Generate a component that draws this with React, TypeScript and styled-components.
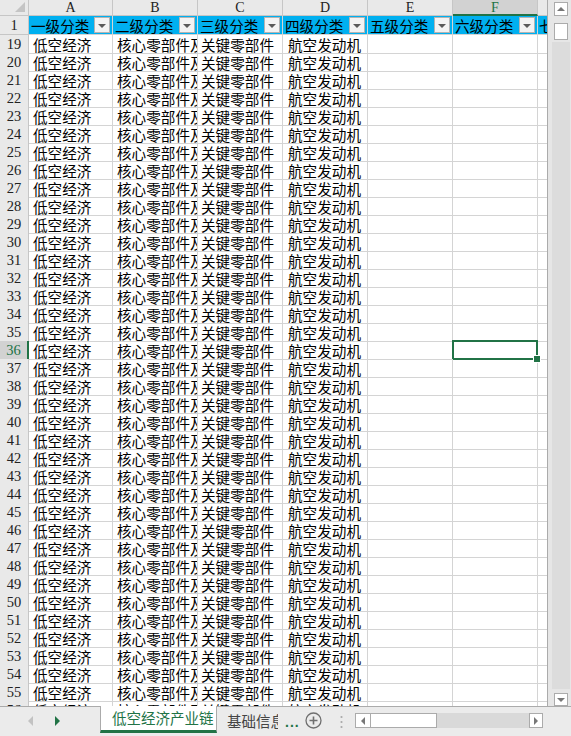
import React from "react";
import styled, { createGlobalStyle, css } from "styled-components";

const Global = createGlobalStyle`
  html, body { margin: 0; padding: 0; overflow: hidden; background: #fff; }
  * { box-sizing: border-box; }
`;

const GREEN = "#217346";
const BLUE = "#00b0f0";
const GRID = "#d4d4d4";
const HEAD_BG = "#e9e9e9";
const HEAD_LINE = "#c6c6c6";

const COLS = "29px 84px 85px 85px 85px 85px 85px 85px";

const Shell = styled.div`
  width: 571px;
  height: 736px;
  display: flex;
  flex-direction: column;
  overflow: hidden;
  font-family: "Noto Sans CJK SC", sans-serif;
`;

const Main = styled.div`
  height: 707px;
  display: flex;
  flex-direction: row;
  border-bottom: 1px solid #ababab;
`;

const Sheet = styled.div`
  width: 548px;
  flex: none;
  display: flex;
  flex-direction: column;
  overflow: hidden;
  border-right: 1px solid #ababab;
`;

const Row = styled.div<{ $h: number }>`
  display: grid;
  grid-template-columns: ${COLS};
  width: 623px;
  height: ${(p) => p.$h}px;
  flex: none;
`;

const Corner = styled.div`
  background: ${HEAD_BG};
  border-right: 1px solid ${HEAD_LINE};
  border-bottom: 1px solid ${HEAD_LINE};
  display: flex;
  align-items: flex-end;
  justify-content: flex-end;
  padding: 0 3px 3px 0;
`;

const CornerTri = styled.div`
  width: 0;
  height: 0;
  border-left: 10px solid transparent;
  border-bottom: 10px solid #c4c4c4;
`;

const ColHead = styled.div<{ $active?: boolean }>`
  background: ${(p) => (p.$active ? "#d2d2d2" : HEAD_BG)};
  border-right: 1px solid ${HEAD_LINE};
  border-bottom: ${(p) => (p.$active ? `2px solid ${GREEN}` : `1px solid ${HEAD_LINE}`)};
  color: ${(p) => (p.$active ? GREEN : "#222")};
  font-family: "Liberation Serif", serif;
  font-size: 14px;
  line-height: 15px;
  text-align: center;
  overflow: hidden;
`;

const RowHead = styled.div<{ $active?: boolean }>`
  background: ${(p) => (p.$active ? "#d2d2d2" : HEAD_BG)};
  border-right: ${(p) => (p.$active ? `2px solid ${GREEN}` : `1px solid ${HEAD_LINE}`)};
  border-bottom: 1px solid ${HEAD_LINE};
  color: ${(p) => (p.$active ? GREEN : "#222")};
  font-family: "Liberation Serif", serif;
  font-size: 14.5px;
  display: flex;
  align-items: center;
  justify-content: center;
  padding-top: 1px;
`;

const Cell = styled.div<{ $head?: boolean; $selected?: boolean; $pad?: number }>`
  position: relative;
  border-right: 1px solid ${GRID};
  border-bottom: 1px solid ${GRID};
  font-size: 14.6px;
  color: #000;
  white-space: nowrap;
  overflow: hidden;
  display: flex;
  align-items: center;
  padding-left: ${(p) => p.$pad ?? 4}px;
  ${(p) =>
    p.$head &&
    css`
      background: ${BLUE};
      justify-content: space-between;
    `}
  ${(p) =>
    p.$selected &&
    css`
      overflow: visible;
      &::after {
        content: "";
        position: absolute;
        left: -1px;
        top: -1px;
        right: -1px;
        bottom: -1px;
        border: 2px solid ${GREEN};
      }
      &::before {
        content: "";
        position: absolute;
        right: -4px;
        bottom: -4px;
        width: 6px;
        height: 6px;
        background: ${GREEN};
        border: 1px solid #fff;
        z-index: 2;
      }
    `}
`;

const HeadText = styled.span`
  overflow: hidden;
  white-space: nowrap;
`;

const FilterBtn = styled.div`
  flex: none;
  width: 16px;
  height: 16px;
  margin-right: 2px;
  background: #f3f3f3;
  border: 1px solid #b4b4b4;
  display: flex;
  align-items: center;
  justify-content: center;
`;

const FilterTri = styled.div`
  width: 0;
  height: 0;
  border-left: 4px solid transparent;
  border-right: 4px solid transparent;
  border-top: 4px solid #5a5a5a;
  margin-top: 1px;
`;

const VScroll = styled.div`
  width: 23px;
  background: #e6e6e6;
  display: flex;
  flex-direction: column;
  align-items: center;
  padding: 2px 0 0 2px;
`;

const ScrollBtn = styled.div<{ $w: number; $h: number }>`
  width: ${(p) => p.$w}px;
  height: ${(p) => p.$h}px;
  flex: none;
  background: #fff;
  border: 1px solid #ababab;
  display: flex;
  align-items: center;
  justify-content: center;
`;

const VThumb = styled.div`
  width: 14px;
  height: 17px;
  flex: none;
  margin-top: 7px;
  background: #fff;
  border: 1px solid #ababab;
`;

const VTrack = styled.div`
  flex: 1;
  width: 18px;
  background: #dcdcdc;
  margin: 2px 0 4px;
`;

const Arrow = styled.div<{ $dir: "up" | "down" | "left" | "right"; $c?: string; $s?: number }>`
  width: 0;
  height: 0;
  ${(p) => {
    const s = p.$s ?? 4;
    const c = p.$c ?? "#777";
    switch (p.$dir) {
      case "up":
        return css`border-left: ${s}px solid transparent; border-right: ${s}px solid transparent; border-bottom: ${s}px solid ${c};`;
      case "down":
        return css`border-left: ${s}px solid transparent; border-right: ${s}px solid transparent; border-top: ${s}px solid ${c};`;
      case "left":
        return css`border-top: ${s}px solid transparent; border-bottom: ${s}px solid transparent; border-right: ${s}px solid ${c};`;
      default:
        return css`border-top: ${s}px solid transparent; border-bottom: ${s}px solid transparent; border-left: ${s}px solid ${c};`;
    }
  }}
`;

const TabBar = styled.div`
  flex: 1;
  display: flex;
  flex-direction: row;
  align-items: stretch;
  background: #ebebeb;
`;

const Nav = styled.div`
  width: 100px;
  flex: none;
  display: flex;
  align-items: center;
  gap: 22px;
  padding-left: 28px;
  padding-bottom: 2px;
`;

const Tab = styled.div<{ $active?: boolean; $w: number; $pad?: number }>`
  width: ${(p) => p.$w}px;
  flex: none;
  overflow: hidden;
  white-space: nowrap;
  font-size: 14.5px;
  display: flex;
  align-items: center;
  padding-left: ${(p) => p.$pad ?? 11}px;
  padding-bottom: 2px;
  color: ${(p) => (p.$active ? GREEN : "#444")};
  ${(p) =>
    p.$active &&
    css`
      background: #fff;
      border-left: 1px solid #ababab;
      border-right: 1px solid #ababab;
      border-bottom: 3px solid ${GREEN};
      margin-top: -1px;
      margin-bottom: 3px;
    `}
`;

const More = styled.div`
  flex: none;
  color: ${GREEN};
  font-size: 14px;
  font-weight: bold;
  font-family: "Liberation Sans", sans-serif;
  display: flex;
  align-items: center;
  width: 25px;
  padding-left: 7px;
  letter-spacing: 1px;
`;

const AddBtn = styled.div`
  flex: none;
  display: flex;
  align-items: center;
  width: 32px;
  padding: 0 0 2px 2px;
`;

const Dots = styled.div`
  flex: none;
  display: flex;
  align-items: center;
  width: 20px;
  padding-left: 5px;
`;

const HScroll = styled.div`
  width: 188px;
  flex: none;
  display: flex;
  align-items: center;
  padding-bottom: 2px;
`;

const HThumb = styled.div`
  width: 66px;
  height: 15px;
  background: #fff;
  border: 1px solid #ababab;
  border-left: none;
`;

const HTrack = styled.div`
  width: 92px;
  height: 15px;
  background: #d9d9d9;
`;

const data = Array.from({ length: 38 }, (_, i) => 19 + i);
const heads = ["一级分类", "二级分类", "三级分类", "四级分类", "五级分类", "六级分类"];
const letters = ["A", "B", "C", "D", "E", "F", "G"];

export default function App() {
  return (
    <>
      <Global />
      <Shell>
        <Main>
          <Sheet>
            <Row $h={16}>
              <Corner>
                <CornerTri />
              </Corner>
              {letters.map((l) => (
                <ColHead key={l} $active={l === "F"}>
                  {l}
                </ColHead>
              ))}
            </Row>
            <Row $h={19}>
              <RowHead>1</RowHead>
              {heads.map((h) => (
                <Cell key={h} $head $pad={2}>
                  <HeadText>{h}</HeadText>
                  <FilterBtn>
                    <FilterTri />
                  </FilterBtn>
                </Cell>
              ))}
              <Cell $head $pad={1}>
                <HeadText>七级分类</HeadText>
                <FilterBtn>
                  <FilterTri />
                </FilterBtn>
              </Cell>
            </Row>
            {data.map((n) => (
              <Row $h={18} key={n}>
                <RowHead $active={n === 36}>{n}</RowHead>
                <Cell>低空经济</Cell>
                <Cell>核心零部件及材料</Cell>
                <Cell $pad={3}>关键零部件</Cell>
                <Cell $pad={5}>航空发动机</Cell>
                <Cell />
                <Cell $selected={n === 36} />
                <Cell />
              </Row>
            ))}
          </Sheet>
          <VScroll>
            <ScrollBtn $w={14} $h={14}>
              <Arrow $dir="up" $s={4} />
            </ScrollBtn>
            <VThumb />
            <VTrack />
            <ScrollBtn $w={14} $h={13}>
              <Arrow $dir="down" $s={4} />
            </ScrollBtn>
          </VScroll>
        </Main>
        <TabBar>
          <Nav>
            <Arrow $dir="left" $c="#c2c2c2" $s={5} />
            <Arrow $dir="right" $c={GREEN} $s={5} />
          </Nav>
          <Tab $active $w={117}>
            低空经济产业链
          </Tab>
          <Tab $w={61} $pad={10}>
            基础信息
          </Tab>
          <More>...</More>
          <AddBtn>
            <svg width="17" height="17" viewBox="0 0 17 17">
              <circle cx="8.5" cy="8.5" r="7.5" fill="none" stroke="#6f6f6f" strokeWidth="1.3" />
              <path d="M8.5 4.5v8M4.5 8.5h8" stroke="#6f6f6f" strokeWidth="1.6" />
            </svg>
          </AddBtn>
          <Dots>
            <svg width="3" height="14" viewBox="0 0 3 14">
              <circle cx="1.5" cy="2" r="1.1" fill="#a8a8a8" />
              <circle cx="1.5" cy="7" r="1.1" fill="#a8a8a8" />
              <circle cx="1.5" cy="12" r="1.1" fill="#a8a8a8" />
            </svg>
          </Dots>
          <HScroll>
            <ScrollBtn $w={16} $h={15}>
              <Arrow $dir="left" $s={4} />
            </ScrollBtn>
            <HThumb />
            <HTrack />
            <ScrollBtn $w={14} $h={15}>
              <Arrow $dir="right" $s={4} />
            </ScrollBtn>
          </HScroll>
        </TabBar>
      </Shell>
    </>
  );
}
